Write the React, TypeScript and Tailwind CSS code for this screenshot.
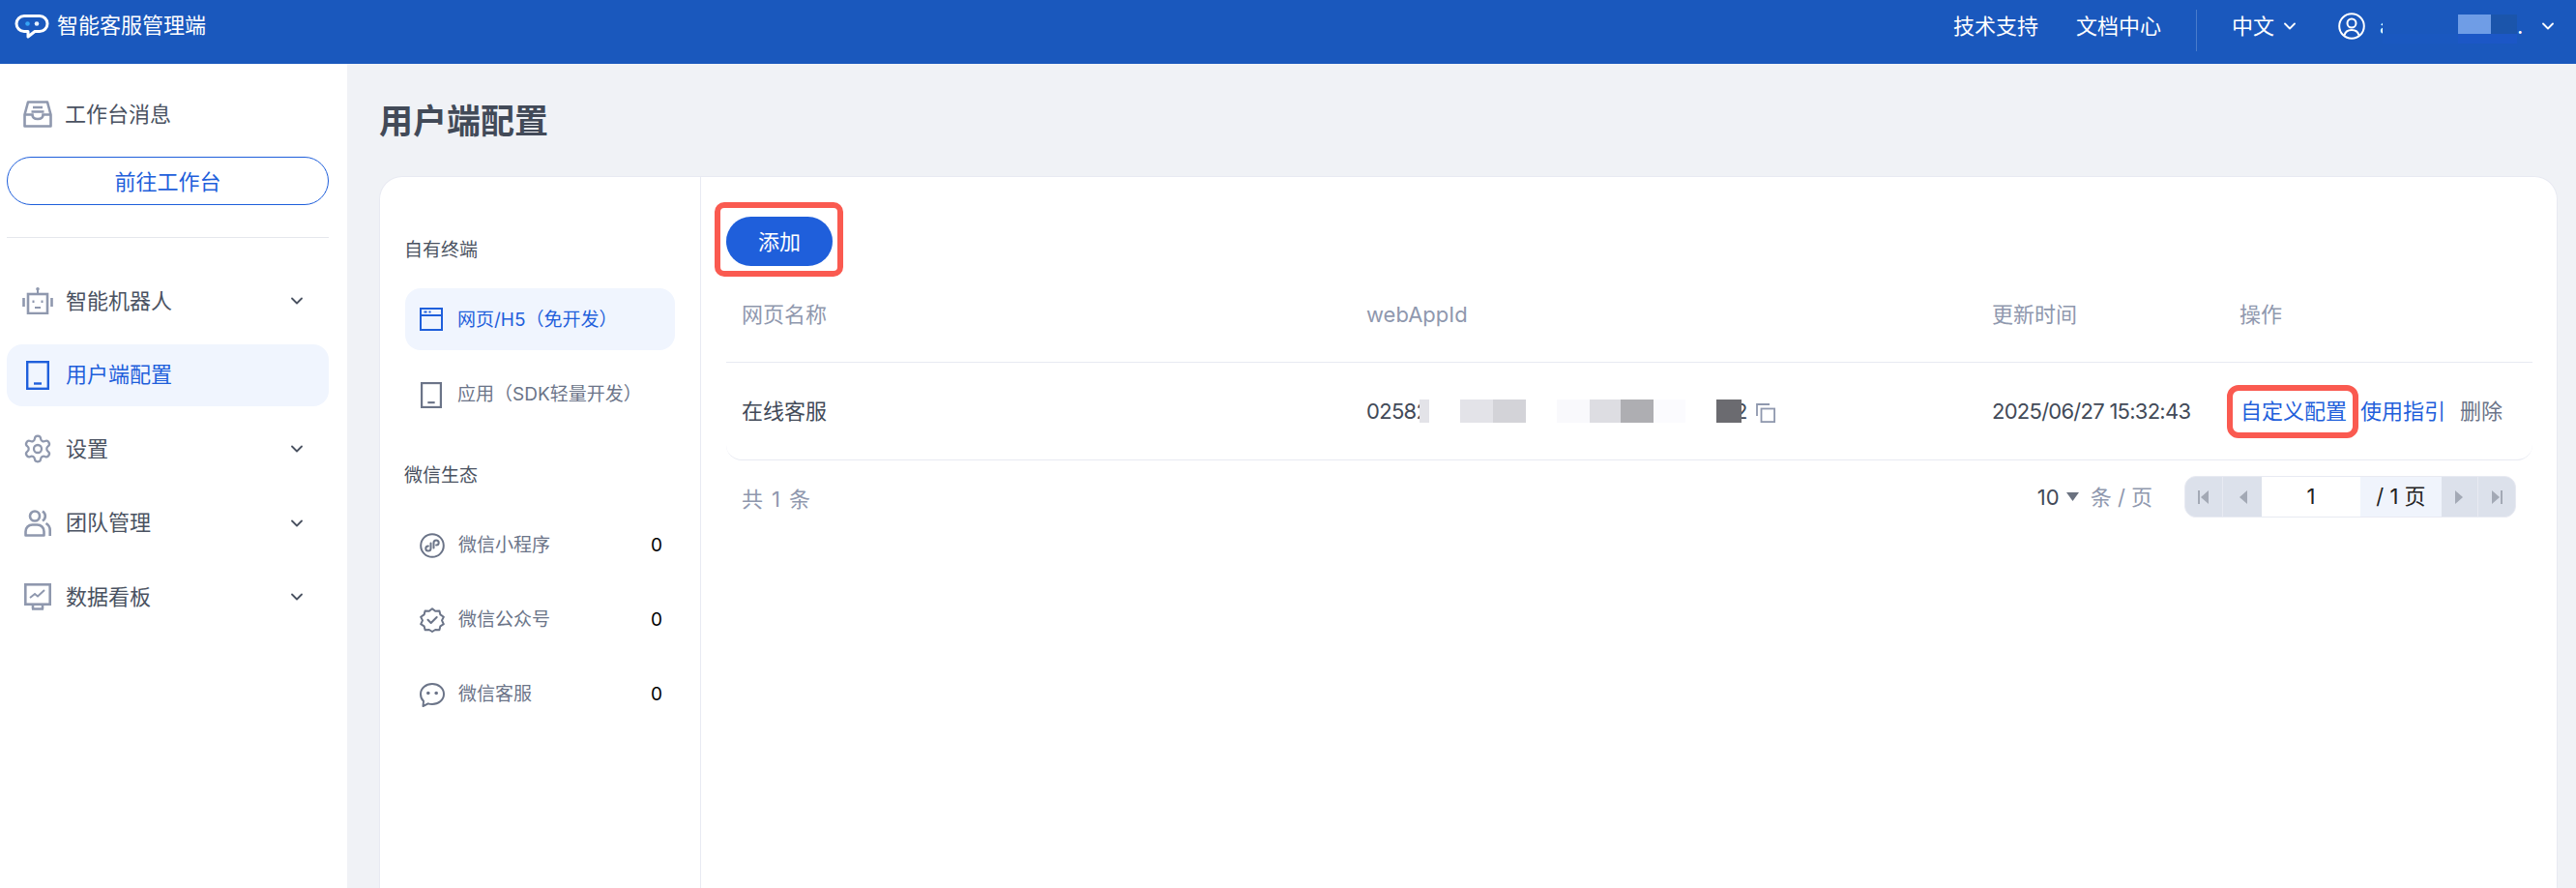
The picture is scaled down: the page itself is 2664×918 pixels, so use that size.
import React from 'react';
import { ChevronDown, Settings } from 'lucide-react';

const font = '[font-family:Inter,"Noto_Sans_CJK_SC",sans-serif]';

const LogoIcon = () => (
  <svg width="36" height="25" viewBox="0 0 36 25" fill="none">
    <path d="M10 1.500h16a8 8 0 0 1 8 8v0a8 8 0 0 1-8 8h-5l-7 5.500v-5.500h-4a8 8 0 0 1-8-8v0a8 8 0 0 1 8-8z" stroke="#fff" strokeWidth="3" strokeLinejoin="round" />
    <circle cx="13.500" cy="9.500" r="2.300" fill="#36a3f5" />
    <circle cx="23" cy="9.500" r="2.300" fill="#e8f2ff" />
  </svg>
);

const InboxIcon = () => (
  <svg width="30" height="28" viewBox="0 0 30 28" fill="none" stroke="#8f98ae" strokeWidth="2.600">
    <path d="M5 1.500h20l3.500 13v12h-27v-12z" strokeLinejoin="round" />
    <path d="M1.500 14.500h8c0 3 2 4.500 5.500 4.500s5.500-1.500 5.500-4.500h8" />
    <path d="M10 7h10M8.500 11.500h13" />
  </svg>
);

const BotIcon = () => (
  <svg width="32" height="28" viewBox="0 0 32 28" fill="none" stroke="#8f98ae" strokeWidth="2.600">
    <circle cx="16" cy="1.800" r="1.800" fill="#8f98ae" stroke="none" />
    <path d="M16 2v5" strokeWidth="2" />
    <rect x="6" y="7" width="20" height="20" />
    <path d="M1.500 11v9M30.500 11v9" />
    <path d="M11.500 13.500v2.500M20.500 13.500v2.500M13 21h6" strokeWidth="2" />
  </svg>
);

const TabletIcon = ({ color, w, h }: { color: string; w: number; h: number }) => (
  <svg width={w} height={h} viewBox="0 0 24 30" fill="none" preserveAspectRatio="none">
    <rect x="1.200" y="1.200" width="21.600" height="27.600" stroke={color} strokeWidth="2.400" />
    <path d="M8 23.500h8" stroke={color} strokeWidth="2.400" />
  </svg>
);

const TeamIcon = () => (
  <svg width="28" height="28" viewBox="0 0 28 28" fill="none" stroke="#8f98ae" strokeWidth="2.600">
    <circle cx="11" cy="6.500" r="5" />
    <path d="M1.500 26.500v-4c0-4 3-7 7-7h5c4 0 7 3 7 7v4z" strokeLinejoin="round" />
    <path d="M19 1.500c2 1.500 2.800 3 2.800 5s-1 3.800-2.800 5M22.500 14c2.500 1.500 4.200 4 4.200 7v6" />
  </svg>
);

const ChartIcon = () => (
  <svg width="28" height="28" viewBox="0 0 28 28" fill="none" stroke="#8f98ae" strokeWidth="2.600">
    <rect x="1.300" y="1.300" width="25.400" height="20.400" />
    <path d="M8 26.500h12M9 22v4.500M19 22v4.500" />
    <path d="M6 15l5-4 3 2.500 7-6.500" strokeWidth="2" />
  </svg>
);

const BrowserIcon = () => (
  <svg width="24" height="24" viewBox="0 0 24 24" fill="none" stroke="#1f5fdb" strokeWidth="2">
    <rect x="1" y="1" width="22" height="22" />
    <path d="M1 8h22" />
    <path d="M4.500 4.500h3M9.500 4.500h2" />
  </svg>
);

const MiniIcon = () => (
  <svg width="26" height="26" viewBox="0 0 26 26" fill="none" stroke="#6b7488" strokeWidth="2">
    <circle cx="13" cy="13" r="11.800" />
    <path d="M11.500 10.500v5.500a2.600 2.600 0 1 1-2.600-2.600M14.500 15.500V10a2.600 2.600 0 1 1 2.600 2.600" strokeLinecap="round" />
  </svg>
);

const BadgeIcon = () => (
  <svg width="26" height="26" viewBox="0 0 26 26" fill="none" stroke="#6b7488" strokeWidth="2" strokeLinejoin="round">
    <path d="M13 1.200l3.200 2.600 4.200-.4 1 4 3.400 2.400L23 13.400l1.800 3.800-3.400 2.100-1 4-4.200-.3L13 25l-3.200-2-4.200.3-1-4-3.400-2.100L3 13.400 1.200 9.800l3.400-2.400 1-4 4.200.4z" />
    <path d="M8.500 12.800l3.200 3.200 6-6" strokeLinecap="round" />
  </svg>
);

const ChatIcon = () => (
  <svg width="26" height="25" viewBox="0 0 26 25" fill="none" stroke="#6b7488" strokeWidth="2">
    <path d="M13 1c6.600 0 12 4.500 12 10.500S19.600 22 13 22c-1.500 0-3-.2-4.200-.7L3.500 24l.5-5.200C2 17 1 14.500 1 11.500 1 5.500 6.400 1 13 1z" strokeLinejoin="round" />
    <circle cx="8.800" cy="10.500" r="1.800" fill="#6b7488" stroke="none" />
    <circle cx="17.200" cy="10.500" r="1.800" fill="#6b7488" stroke="none" />
  </svg>
);

const UserIcon = () => (
  <svg width="28" height="28" viewBox="0 0 28 28" fill="none" stroke="#fff" strokeWidth="2">
    <circle cx="14" cy="14" r="12.800" />
    <circle cx="14" cy="11" r="4.500" />
    <path d="M6.500 23.500c.8-3.500 3.800-5.500 7.500-5.500s6.700 2 7.500 5.500" />
  </svg>
);

const CopyIcon = () => (
  <svg width="20" height="20" viewBox="0 0 20 20" fill="none" stroke="#8f98ae" strokeWidth="1.800">
    <rect x="5.500" y="5.500" width="13.600" height="13.600" />
    <path d="M1 13V1h13" />
  </svg>
);

const PageArrow = ({ dir, bar }: { dir: 'left' | 'right'; bar?: boolean }) => (
  <svg width="12" height="14" viewBox="0 0 12 14" fill="#a3a9b5">
    {dir === 'left' ? (
      <>
        {bar && <rect x="0" y="0" width="2" height="14" />}
        <path d="M11 0v14L3 7z" />
      </>
    ) : (
      <>
        <path d="M1 0v14l8-7z" />
        {bar && <rect x="10" y="0" width="2" height="14" />}
      </>
    )}
  </svg>
);

const navItems = [
  { label: '智能机器人', icon: <BotIcon /> },
  { label: '用户端配置', active: true },
  { label: '设置', icon: <Settings size={34} strokeWidth={1.700} color="#8f98ae" /> },
  { label: '团队管理', icon: <TeamIcon /> },
  { label: '数据看板', icon: <ChartIcon /> },
];

const wechatItems = [
  { label: '微信小程序', icon: <MiniIcon /> },
  { label: '微信公众号', icon: <BadgeIcon /> },
  { label: '微信客服', icon: <ChatIcon /> },
];

// mosaic over the hidden webAppId
const idMask = [
  { w: 'w-[10px]', c: 'bg-[#e3e3e8]' },
  { w: 'w-[32px]', c: 'bg-white' },
  { w: 'w-[34px]', c: 'bg-[#e3e3e8]' },
  { w: 'w-[34px]', c: 'bg-[#d3d3d8]' },
  { w: 'w-[32px]', c: 'bg-white' },
  { w: 'w-[34px]', c: 'bg-[#f9f9fc]' },
  { w: 'w-[32px]', c: 'bg-[#ddddE2]' },
  { w: 'w-[34px]', c: 'bg-[#aeaeb2]' },
  { w: 'w-[33px]', c: 'bg-[#fbfbfe]' },
  { w: 'w-[32px]', c: 'bg-white' },
  { w: 'w-[26px]', c: 'bg-[#6b6b70]' },
];

export default function App() {
  return (
    <div className={`${font} flex h-[918px] w-full flex-col overflow-hidden bg-[#f0f2f6]`}>
      <header className="flex h-[66px] shrink-0 items-start bg-[#1a58bd] pt-[11px] text-[22px] leading-[32px] text-white">
        <div className="ml-[15px] flex h-[32px] items-center gap-[8px]">
          <LogoIcon />
          <span className="-mt-[2px]">智能客服管理端</span>
        </div>
        <div className="ml-auto flex h-[32px] items-center">
          <span>技术支持</span>
          <span className="ml-[39px]">文档中心</span>
          <div className="ml-[36px] mt-[9px] h-[43px] w-px shrink-0 bg-[#4a7bcb]" />
          <span className="ml-[36px]">中文</span>
          <ChevronDown size={20} strokeWidth={2.200} className="ml-[6px]" />
          <span className="ml-[40px]"><UserIcon /></span>
          <span className="ml-[15px] w-[3px] whitespace-nowrap">a</span>
          <div className="relative z-10 mt-[6px] flex h-[30px] w-[139px] flex-col">
            <div className="flex h-[20px]">
              <div className="w-[78px] bg-[#1a58bd]" />
              <div className="w-[34px] bg-[#6f9de6]" />
              <div className="w-[27px] bg-[#1b55ab]" />
            </div>
            <div className="flex h-[10px]">
              <div className="w-[78px] bg-[#1a58c0]" />
              <div className="w-[61px] bg-[#1c57c6]" />
            </div>
          </div>
          <span className="w-[6px]">.</span>
          <ChevronDown size={20} strokeWidth={2.200} className="ml-[16px] mr-[19px]" />
        </div>
      </header>

      <div className="flex min-h-0 flex-1">
        <aside className="w-[359px] shrink-0 bg-white px-[7px] text-[22px] text-[#4a5261]">
          <div className="mt-[34px] flex h-[36px] items-center gap-[14px] pl-[17px]">
            <InboxIcon />
            <span className="-ml-px">工作台消息</span>
          </div>
          <button className="mt-[26px] h-[50px] w-[333px] rounded-full border border-[#1f5fdb] pt-[2px] text-[22px] text-[#1f5fdb]">
            前往工作台
          </button>
          <div className="mt-[33px] h-px w-[333px] bg-[#e5e7ec]" />
          <nav className="mt-[33px] flex w-[333px] flex-col gap-[12.500px]">
            {navItems.map((item) =>
              item.active ? (
                <div key={item.label} className="flex h-[64px] items-center gap-[17px] rounded-[16px] bg-[#f0f5fe] pl-[20px] text-[#1f5fdb]">
                  <TabletIcon color="#1f5fdb" w={24} h={30} />
                  <span>{item.label}</span>
                </div>
              ) : (
                <div key={item.label} className="flex h-[64px] items-center pl-[16px]">
                  <span className="flex w-[32px] justify-center">{item.icon}</span>
                  <span className="ml-[13px]">{item.label}</span>
                  <ChevronDown size={20} strokeWidth={2.200} className="ml-auto mr-[23px] text-[#4a5261]" />
                </div>
              ),
            )}
          </nav>
        </aside>

        <main className="flex min-w-0 flex-1 flex-col pl-[33px] pr-[19px]">
          <h1 className="mt-[33px] h-[52px] text-[35px] font-semibold leading-[52px] text-[#424a58]">用户端配置</h1>
          <div className="mt-[31px] flex min-h-0 flex-1 rounded-t-[24px] border-x border-t border-[#e8eaf2] bg-white">
            <div className="w-[332px] shrink-0 border-r border-[#e8eaf2] px-[26px] text-[19px]">
              <div className="-ml-px mt-[62px] h-[28px] leading-[28px] text-[#4a5261]">自有终端</div>
              <div className="mt-[25px] flex h-[64px] items-center gap-[15px] rounded-[16px] bg-[#f0f5fe] pl-[15px] text-[#1f5fdb]">
                <BrowserIcon />
                <span className="pt-[2px]">网页/H5（免开发）</span>
              </div>
              <div className="mt-[14px] flex h-[64px] items-center gap-[16px] pl-[16px] text-[#6b7488]">
                <TabletIcon color="#6b7488" w={22} h={27} />
                <span>应用（SDK轻量开发）</span>
              </div>
              <div className="-ml-px mt-[38px] h-[28px] leading-[28px] text-[#4a5261]">微信生态</div>
              <div className="mt-[26px] flex flex-col gap-[13px]">
                {wechatItems.map((item) => (
                  <div key={item.label} className="flex h-[64px] items-center pl-[15px] text-[#6b7488]">
                    <span className="flex w-[26px] justify-center">{item.icon}</span>
                    <span className="ml-[14px]">{item.label}</span>
                    <span className="ml-auto mr-[13px] text-black">0</span>
                  </div>
                ))}
              </div>
            </div>

            <div className="min-w-0 flex-1 pl-[26px] pr-[25px] pt-[41px] text-[22px]">
              <div className="relative w-[110px]">
                <button className="h-[51px] w-[110px] rounded-full bg-[#1f5fdb] pt-[2px] text-[22px] text-white">添加</button>
                <div className="absolute -bottom-[11px] -left-[12px] -right-[11px] -top-[15px] rounded-[10px] border-[6px] border-[#fa5a50]" />
              </div>

              <div className="flex h-[100px] items-center border-b border-[#e8eaf2] pt-[1px] text-[#8f98ae]">
                <div className="w-[662px] pl-[16px]">网页名称</div>
                <div className="w-[647px]">webAppId</div>
                <div className="w-[256px]">更新时间</div>
                <div>操作</div>
              </div>

              <div className="flex h-[101px] items-center rounded-b-[16px] border-b border-[#e8eaf2] text-[#424a58]">
                <div className="w-[662px] pl-[16px]">在线客服</div>
                <div className="flex w-[647px] items-center">
                  <span className="w-[55px] whitespace-nowrap tracking-[-0.700px]">02582</span>
                  <div className="relative z-10 flex h-[24px]">
                    {idMask.map((m, i) => (
                      <div key={i} className={`${m.w} ${m.c} h-[24px]`} />
                    ))}
                  </div>
                  <span className="-ml-[7px]">2</span>
                  <span className="ml-[9px] mt-[3px]"><CopyIcon /></span>
                </div>
                <div className="w-[243px] whitespace-nowrap tracking-[-0.740px]">2025/06/27 15:32:43</div>
                <div className="relative ml-[14px] text-[#1f5fdb]">
                  自定义配置
                  <div className="absolute -bottom-[11px] -left-[14px] -right-[12px] -top-[11px] rounded-[12px] border-[6px] border-[#fa5a50]" />
                </div>
                <div className="ml-[14px] text-[#1f5fdb]">使用指引</div>
                <div className="ml-[15px] text-[#6b7488]">删除</div>
              </div>

              <div className="mt-[16px] flex h-[43px] items-center pr-[17px]">
                <span className="ml-[16px] pt-[5px] tracking-[1.400px] text-[#8f98ae]">共 1 条</span>
                <span className="ml-auto pt-[2px] text-[#424a58]">10</span>
                <svg width="13" height="9" viewBox="0 0 13 9" className="ml-[7px]" fill="#6b7280">
                  <path d="M0 0h13L6.500 9z" />
                </svg>
                <span className="ml-[12px] pt-[2px] text-[#8f98ae]">条 / 页</span>
                <div className="ml-[33px] flex h-[43px] w-[343px] items-stretch overflow-hidden rounded-[12px] border border-[#e8eaf2] bg-[#dce1eb]">
                  <div className="flex w-[39px] items-center justify-center border-r border-[#e8eaf2]"><PageArrow dir="left" bar /></div>
                  <div className="flex w-[40px] items-center justify-center"><PageArrow dir="left" /></div>
                  <div className="flex w-[102px] items-center justify-center bg-white text-[#222]">1</div>
                  <div className="flex w-[84px] items-center justify-center bg-[#f0f4fc] text-[#222]">/ 1 页</div>
                  <div className="flex w-[38px] items-center justify-center border-r border-[#e8eaf2]"><PageArrow dir="right" /></div>
                  <div className="flex flex-1 items-center justify-center"><PageArrow dir="right" bar /></div>
                </div>
              </div>
            </div>
          </div>
        </main>
      </div>
    </div>
  );
}
